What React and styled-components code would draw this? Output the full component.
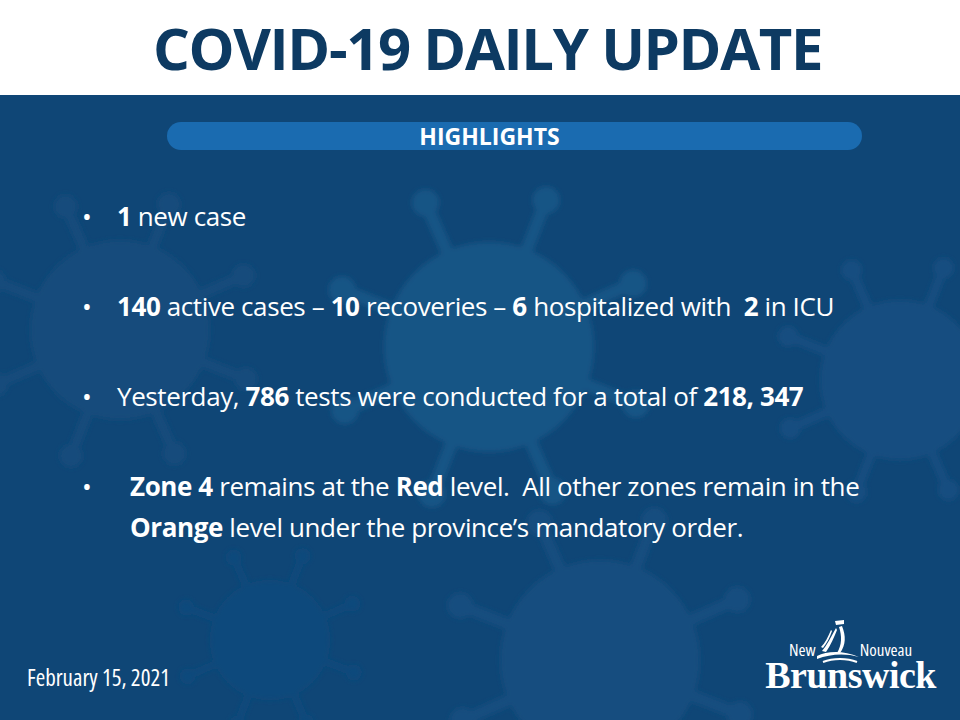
import React from 'react';
import styled, { createGlobalStyle } from 'styled-components';

const FONT = '"Open Sans", Roboto, sans-serif';

const GlobalStyle = createGlobalStyle`
  html, body {
    margin: 0;
    padding: 0;
    background: #ffffff;
  }
`;

const VIRUSES = [
  { x: 489, y: 347, r: 105, c: '#185485' },
  { x: 900, y: 380, r: 80, c: '#134e80' },
  { x: 120, y: 330, r: 90, c: '#124b7c' },
  { x: 600, y: 660, r: 100, c: '#134d7f' },
  { x: 270, y: 640, r: 60, c: '#114a7b' },
];

function Virus({ x, y, r, c }) {
  const spikes = [];
  for (let i = 0; i < 8; i++) {
    const a = (i / 8) * Math.PI * 2 - 1.2;
    const x1 = x + Math.cos(a) * r * 0.9;
    const y1 = y + Math.sin(a) * r * 0.9;
    const x2 = x + Math.cos(a) * r * 1.5;
    const y2 = y + Math.sin(a) * r * 1.5;
    spikes.push(
      <g key={i}>
        <line x1={x1} y1={y1} x2={x2} y2={y2} stroke={c} strokeWidth={r * 0.12} strokeLinecap="round" />
        <circle cx={x2} cy={y2} r={r * 0.13} fill={c} />
      </g>
    );
  }
  return (
    <g filter="url(#soft)">
      {spikes}
      <circle cx={x} cy={y} r={r} fill={c} />
    </g>
  );
}

function VirusBackdrop() {
  return (
    <BackdropSvg viewBox="0 0 960 625" preserveAspectRatio="none">
      <defs>
        <filter id="soft" x="-20%" y="-20%" width="140%" height="140%">
          <feGaussianBlur stdDeviation="2.5" />
        </filter>
      </defs>
      <rect width="960" height="625" fill="#0f4676" />
      {VIRUSES.map((v, i) => <Virus key={i} x={v.x} y={v.y - 95} r={v.r} c={v.c} />)}
    </BackdropSvg>
  );
}

function NBLogo() {
  return (
    <Logo>
      <LogoSmallRow>
        <LogoSmall>New</LogoSmall>
        <ShipSvg viewBox="0 0 46 46">
          <path d="M20 3 L29 2 L29 6 L21 7 Z" fill="#fff" />
          <path d="M27 8 C31 18 31 27 25 35 L22 35 C27 27 27 18 24 9 Z" fill="#fff" />
          <path d="M21 10 C16 19 12 27 7 33 L11 34 C16 27 19 19 22 12 Z" fill="#fff" />
          <path d="M16 12 C13 19 10 25 6 29 L8 30 C12 25 15 19 17 13 Z" fill="#fff" />
          <path d="M2 38 C12 33 28 32 44 39 C30 35 15 36 2 41 Z" fill="#fff" />
          <path d="M8 44 C18 40 32 40 42 44" stroke="#fff" strokeWidth="2" fill="none" />
        </ShipSvg>
        <LogoSmall>Nouveau</LogoSmall>
      </LogoSmallRow>
      <LogoBig>Brunswick</LogoBig>
    </Logo>
  );
}

export default function App() {
  return (
    <Slide>
      <GlobalStyle />
      <Header>
        <Title>COVID-19 DAILY UPDATE</Title>
      </Header>
      <Body>
        <VirusBackdrop />
        <Content>
          <Pill>HIGHLIGHTS</Pill>
          <BulletList>
            <Bullet>
              <Dot>•</Dot>
              <Text><b>1</b> new case</Text>
            </Bullet>
            <Bullet>
              <Dot>•</Dot>
              <Text><b>140</b> active cases – <b>10</b> recoveries – <b>6</b> hospitalized with&nbsp; <b>2</b> in ICU</Text>
            </Bullet>
            <Bullet>
              <Dot>•</Dot>
              <Text>Yesterday, <b>786</b> tests were conducted for a total of <b>218, 347</b></Text>
            </Bullet>
            <Bullet>
              <Dot>•</Dot>
              <Text indent>
                <b>Zone 4</b> remains at the <b>Red</b> level.&nbsp; All other zones remain in the<br />
                <b>Orange</b> level under the province’s mandatory order.
              </Text>
            </Bullet>
          </BulletList>
          <Footer>
            <DateText>February 15, 2021</DateText>
            <NBLogo />
          </Footer>
        </Content>
      </Body>
    </Slide>
  );
}

const Slide = styled.div`
  width: 960px;
  height: 720px;
  display: flex;
  flex-direction: column;
  overflow: hidden;
  font-family: ${FONT};
  font-stretch: 100%;
`;

const Header = styled.div`
  height: 95px;
  background: #ffffff;
  display: flex;
  align-items: center;
  justify-content: center;
  padding-left: 15px;
`;

const Title = styled.h1`
  margin: 0;
  font-family: ${FONT};
  font-size: 58px;
  font-weight: 700;
  letter-spacing: -1.4px;
  color: #0d3a62;
`;

const Body = styled.div`
  position: relative;
  flex: 1;
  background: #0f4676;
`;

const BackdropSvg = styled.svg`
  position: absolute;
  inset: 0;
  width: 100%;
  height: 100%;
`;

const Content = styled.div`
  position: relative;
  height: 100%;
  display: flex;
  flex-direction: column;
  padding: 27px 0 0;
  box-sizing: border-box;
`;

const Pill = styled.div`
  margin: 0 98px 0 167px;
  padding-right: 50px;
  height: 28px;
  border-radius: 14px;
  background: #1a6bb0;
  color: #ffffff;
  font-size: 23px;
  font-weight: 700;
  display: flex;
  align-items: center;
  justify-content: center;
`;

const BulletList = styled.div`
  display: flex;
  flex-direction: column;
  row-gap: 49px;
  padding: 46px 0 0 82px;
`;

const Bullet = styled.div`
  display: flex;
  align-items: flex-start;
  color: #ffffff;
  font-size: 26px;
  line-height: 41px;
  letter-spacing: -0.4px;
`;

const Dot = styled.span`
  width: 35px;
  flex: none;
`;

const Text = styled.span`
  padding-left: ${props => (props.indent ? '13px' : '0')};
  white-space: nowrap;
  b {
    font-weight: 700;
  }
`;

const Footer = styled.div`
  margin-top: auto;
  display: flex;
  align-items: flex-end;
  justify-content: space-between;
  padding: 0 24px 28px 27px;
`;

const DateText = styled.span`
  color: #ffffff;
  font-size: 23px;
  font-stretch: 75%;
  line-height: 26px;
  padding-bottom: 2px;
`;

const Logo = styled.div`
  display: flex;
  flex-direction: column;
  align-items: center;
  color: #ffffff;
  font-family: "Liberation Serif", serif;
`;

const ShipSvg = styled.svg`
  width: 46px;
  height: 46px;
  margin: 0 -1px -6px;
`;

const LogoSmallRow = styled.div`
  display: flex;
  align-items: flex-end;
  font-family: ${FONT};
  font-stretch: 75%;
`;

const LogoSmall = styled.span`
  font-size: 17px;
  line-height: 16px;
`;

const LogoBig = styled.span`
  font-size: 38px;
  line-height: 34px;
  font-weight: 700;
  letter-spacing: -0.5px;
`;
